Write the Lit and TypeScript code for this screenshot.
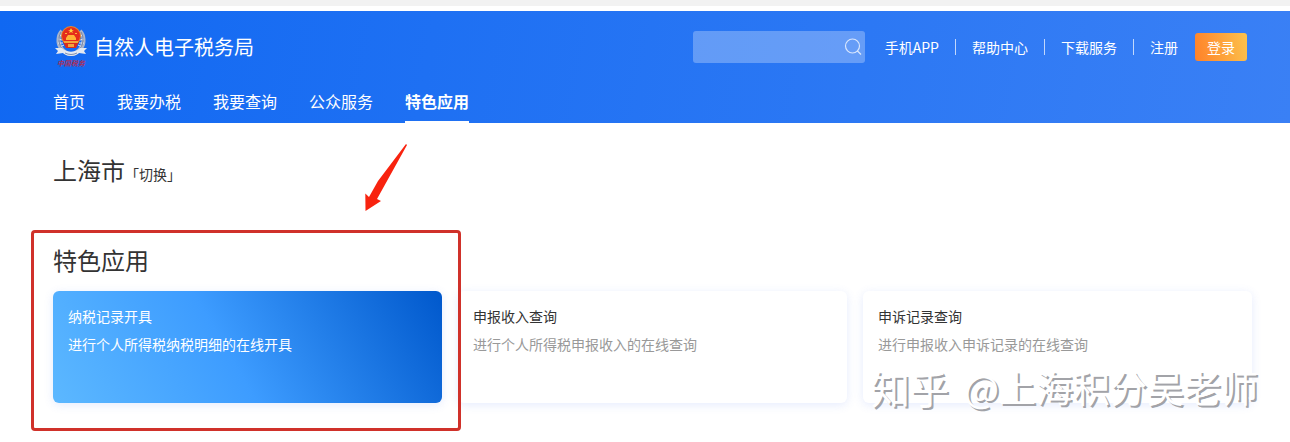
import { LitElement, html, css } from "lit";
import { customElement, property } from "lit/decorators.js";
import { classMap } from "lit/directives/class-map.js";

const NAV = ["首页", "我要办税", "我要查询", "公众服务", "特色应用"];
const LINKS = ["手机APP", "帮助中心", "下载服务", "注册"];
const CARDS = [
  { title: "纳税记录开具", text: "进行个人所得税纳税明细的在线开具" },
  { title: "申报收入查询", text: "进行个人所得税申报收入的在线查询" },
  { title: "申诉记录查询", text: "进行申报收入申诉记录的在线查询" },
];

@customElement("tax-emblem")
class TaxEmblem extends LitElement {
  static styles = css`
    :host { display: block; }
    svg { display: block; }
    .caption { font: italic bold 7px/8px "Noto Sans CJK SC", sans-serif; fill: #a8305c; }
  `;
  render() {
    return html`<svg width="32" height="42" viewBox="0 0 32 42" aria-hidden="true">
      <path d="M7 5C3 9 2 17 6 22c3 4 6 6 10 6s7-2 10-6c4-5 3-13-1-17" fill="none" stroke="#a9b5cc" stroke-width="4"/>
      <path d="M4 9l4 1M3 13l4 1M3 17l5 0M5 21l4-2M28 9l-4 1M29 13l-4 1M29 17l-5 0M27 21l-4-2" stroke="#e6ebf4" stroke-width="1"/>
      <path d="M6 6C3 11 3 18 8 24M26 6c3 5 3 12-2 18" fill="none" stroke="#7885a5" stroke-width="1"/>
      <path d="M0 22l7 0c5 5 13 5 18 0l7 0-3 3 2 3-7-1c-4 4-12 4-16 0l-7 1 2-3z" fill="#e3e9f2"/>
      <path d="M10 27c4 2 8 2 12 0" fill="none" stroke="#8090b0" stroke-width="1"/>
      <circle cx="16" cy="10" r="10" fill="#e8862b"/>
      <circle cx="16" cy="10" r="9" fill="#e52c1b"/>
      <path d="M16 2l1 2h2l-2 1 1 2-2-1-2 1 1-2-2-1h2z" fill="#ffd43c"/>
      <path d="M10 7h2v1h-2zM20 7h2v1h-2zM11 12l2-3h6l2 3v2H11z" fill="#ffb436"/>
      <path d="M8 16h16l-3 6H11z" fill="#d92d1c"/>
      <path d="M9 15h14v2H9zM13 18h6v3h-6z" fill="#f3a53a"/>
      <text class="caption" x="2" y="40">中国税务</text>
    </svg>`;
  }
}

@customElement("service-card")
class ServiceCard extends LitElement {
  @property() heading = "";
  @property() text = "";
  @property({ type: Boolean, reflect: true }) active = false;

  static styles = css`
    :host { display: block; min-width: 0; }
    .card {
      display: block;
      box-sizing: border-box;
      min-height: 112px;
      padding: 11px 15px;
      border-radius: 6px;
      background: #fff;
      box-shadow: 0 2px 10px rgba(80, 120, 240, 0.15);
      color: #333;
      font-size: 14px;
      line-height: 28px;
      text-decoration: none;
    }
    h3, p { margin: 0; font-size: inherit; font-weight: 400; }
    p { color: #999; }
    :host([active]) .card {
      background: linear-gradient(60deg, #5cb8ff 0%, #3d9cff 45%, #0058cc 100%);
      color: #fff;
    }
    :host([active]) p { color: #fff; }
  `;
  render() {
    return html`<a class="card" href="#"><h3>${this.heading}</h3><p>${this.text}</p></a>`;
  }
}

@customElement("app-root")
class AppRoot extends LitElement {
  static styles = css`
    :host {
      display: block;
      position: relative;
      background: #fff;
      color: #333;
      font-family: "Noto Sans CJK SC", sans-serif;
      font-size: 14px;
    }
    a { color: inherit; text-decoration: none; }
    .edge { height: 6px; margin-bottom: 5px; background: #f2f2f2; }
    .header {
      padding: 0 43px 0 53px;
      background: linear-gradient(100deg, #1068f2, #3a80f5);
      color: #fff;
    }
    .top { display: flex; align-items: center; height: 72px; }
    .brand { display: flex; align-items: center; gap: 7px; margin: 0 auto 0 2px; }
    .brand-name { margin: 0; font-size: 20px; font-weight: 400; line-height: 28px; }
    .search {
      display: flex;
      align-items: center;
      box-sizing: border-box;
      width: 172px;
      height: 32px;
      padding-right: 3px;
      border-radius: 3px;
      background: rgba(255, 255, 255, 0.28);
    }
    .search input {
      flex: 1;
      min-width: 0;
      height: 32px;
      box-sizing: border-box;
      padding: 0 8px;
      border: 0;
      outline: 0;
      background: none;
      color: #fff;
      font: inherit;
    }
    .search button { padding: 0; border: 0; background: none; line-height: 0; }
    .links { display: flex; align-items: center; margin: 0 17px 0 3px; }
    .links a { padding: 0 16px; line-height: 16px; border-left: 1px solid rgba(255, 255, 255, 0.7); }
    .links a:first-child { border-left-color: transparent; }
    .links a:last-child { padding-right: 0; }
    .login {
      width: 52px;
      height: 28px;
      padding: 0;
      border: 0;
      border-radius: 3px;
      background: linear-gradient(80deg, #ff8129, #fcc24c);
      color: #fff;
      font: inherit;
      line-height: 28px;
    }
    .nav { display: flex; gap: 32px; font-size: 16px; }
    .nav a { height: 38px; line-height: 36px; border-bottom: 2px solid transparent; }
    .nav .current { font-weight: 700; border-bottom-color: #fff; }
    .main { padding: 27px 38px 39px 53px; }
    .region { display: flex; align-items: baseline; line-height: 40px; }
    .city { margin: 0; font-size: 24px; font-weight: 400; }
    .features { position: relative; margin-top: 47px; }
    .section-title { margin: 0 0 12px; font-size: 24px; font-weight: 400; line-height: 38px; }
    .cards { display: grid; grid-template-columns: repeat(3, minmax(0, 1fr)); gap: 16px; }
    .frame {
      position: absolute;
      top: -11px;
      bottom: -28px;
      left: -22px;
      width: calc((100% - 32px) / 3 + 41px);
      box-sizing: border-box;
      border: 3px solid #d0312a;
      border-radius: 4px;
      pointer-events: none;
    }
    .arrow { position: absolute; top: -97px; left: 312px; pointer-events: none; }
    .watermark {
      position: absolute;
      right: 32px;
      bottom: 27px;
      display: flex;
      align-items: center;
      gap: 15px;
      color: #fff;
      font-size: 37px;
      line-height: 56px;
      text-shadow: 2px 2px 0 #a2a3a8;
      white-space: nowrap;
      pointer-events: none;
    }
    .watermark-site { font-size: 39px; }
  `;

  render() {
    return html`
      <div class="edge"></div>
      <header class="header">
        <div class="top">
          <div class="brand">
            <tax-emblem></tax-emblem>
            <h1 class="brand-name">自然人电子税务局</h1>
          </div>
          <form class="search" role="search">
            <input type="text" aria-label="搜索" />
            <button type="button" aria-label="搜索">
              <svg width="18" height="18" viewBox="0 0 18 18" fill="none" stroke="#fff" stroke-opacity=".75" stroke-width="1.2">
                <circle cx="8.5" cy="8" r="7" />
                <path d="M13.5 13l3.500 3.500" />
              </svg>
            </button>
          </form>
          <div class="links">${LINKS.map((l) => html`<a href="#">${l}</a>`)}</div>
          <button class="login" type="button">登录</button>
        </div>
        <nav class="nav">
          ${NAV.map((n, i) => html`<a href="#" class=${classMap({ current: i === NAV.length - 1 })}>${n}</a>`)}
        </nav>
      </header>
      <main class="main">
        <div class="region">
          <h2 class="city">上海市</h2>
          <a href="#">「切换」</a>
        </div>
        <section class="features">
          <h2 class="section-title">特色应用</h2>
          <div class="cards">
            ${CARDS.map((c, i) => html`<service-card .heading=${c.title} .text=${c.text} ?active=${i === 0}></service-card>`)}
          </div>
          <div class="frame"></div>
          <svg class="arrow" width="44" height="70" viewBox="0 0 44 70" aria-hidden="true">
            <path d="M41 0L42 1 12 55 16 57 0.500 67 0.300 49.500 4 53 13 37Z" fill="#f8230f" />
          </svg>
        </section>
      </main>
      <div class="watermark">
        <span class="watermark-site">知乎</span>
        <span>@上海积分吴老师</span>
      </div>
    `;
  }
}
